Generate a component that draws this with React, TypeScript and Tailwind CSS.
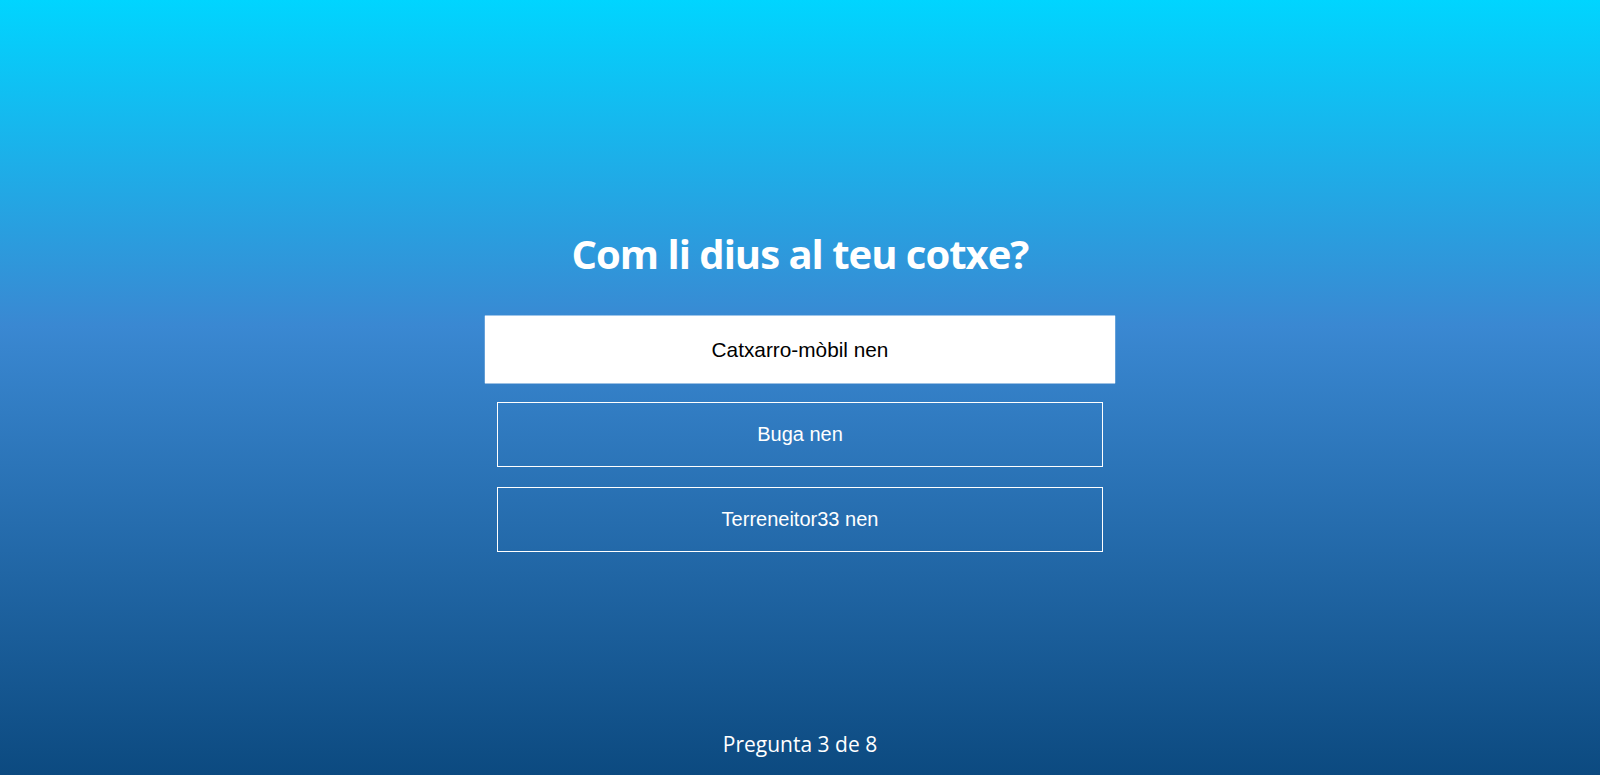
import React, { useState } from 'react';

const options = ['Catxarro-mòbil nen', 'Buga nen', 'Terreneitor33 nen'];

export default function App() {
  const [hovered, setHovered] = useState<number>(0);

  return (
    <div className="h-screen w-full grid grid-rows-[1fr_auto_1fr] bg-[linear-gradient(to_bottom,#00d5ff_0%,#3a88d2_42%,#0c4a80_100%)] text-white overflow-hidden">
      <div />

      <div className="flex flex-col items-center pt-[6px]">
        <h1 className="text-[40px] leading-[48px] font-bold mb-[39px] font-['Open_Sans','Noto_Sans',sans-serif] tracking-[-1px]">
          Com li dius al teu cotxe?
        </h1>

        <div className="flex flex-col gap-[20px] w-[606px]">
          {options.map((opt, i) => (
            <button
              key={opt}
              onMouseEnter={() => setHovered(i)}
              className={`h-[65px] w-full border border-white text-[20px] font-['Liberation_Sans',Arial,sans-serif] transition-transform ${
                hovered === i ? 'bg-white text-black scale-[1.04]' : 'bg-transparent text-white'
              }`}
            >
              {opt}
            </button>
          ))}
        </div>
      </div>

      <div className="flex items-end justify-center pb-[17px]">
        <p className="text-[21px] leading-[28px] font-['Open_Sans','Noto_Sans',sans-serif]">Pregunta 3 de 8</p>
      </div>
    </div>
  );
}
